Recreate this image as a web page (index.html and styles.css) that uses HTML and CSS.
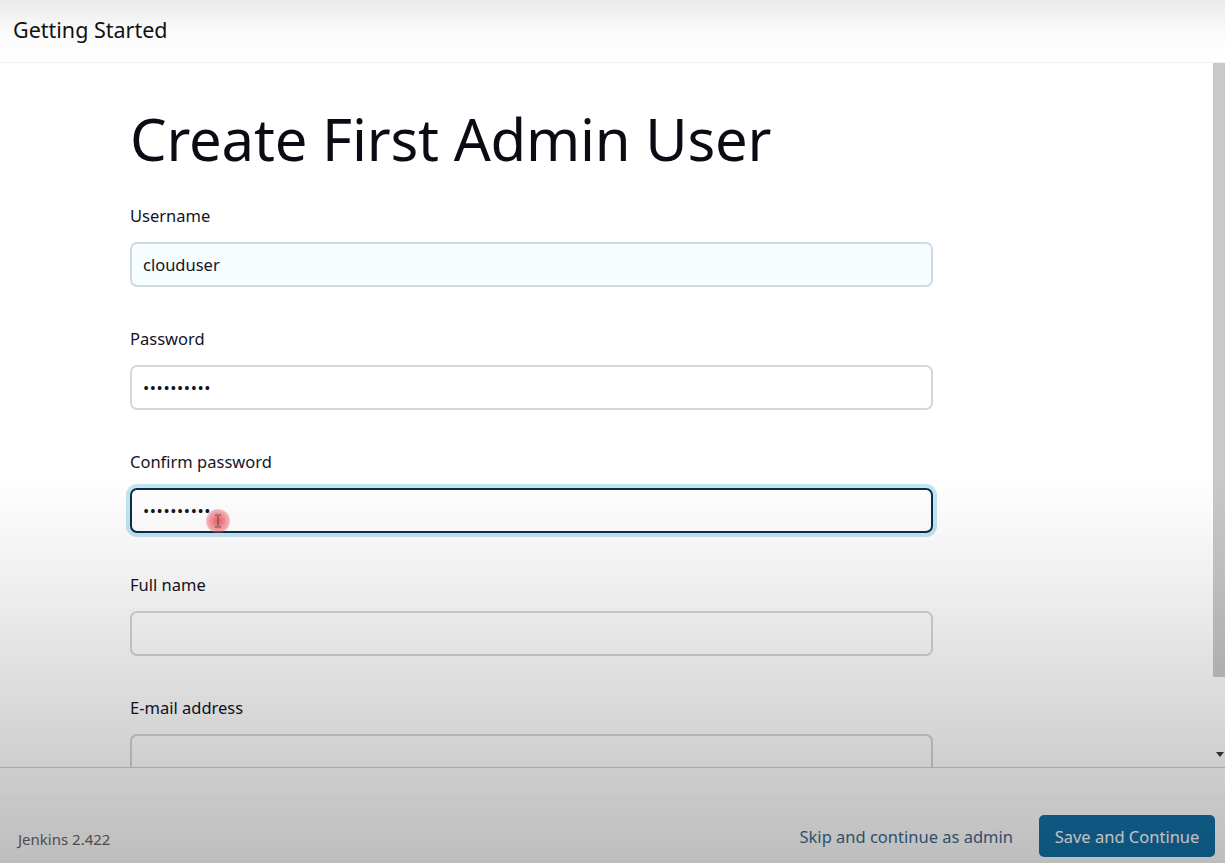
FILE: index.html
```html
<!DOCTYPE html>
<html lang="en">
<head>
    <meta charset="UTF-8">
    <meta name="viewport" content="width=device-width, initial-scale=1.0">
    <title>Setup Wizard [Jenkins]</title>
    <link rel="stylesheet" href="styles.css">
</head>
<body>
    <div class="wizard">
        <header class="wizard-header">
            <h2>Getting Started</h2>
        </header>

        <div class="wizard-body">
            <div class="wizard-content">
                <h1>Create First Admin User</h1>

                <form class="admin-form">
                    <div class="field">
                        <label for="username">Username</label>
                        <input type="text" id="username" class="autofilled" value="clouduser">
                    </div>
                    <div class="field">
                        <label for="password1">Password</label>
                        <input type="password" id="password1" value="cloudpass1">
                    </div>
                    <div class="field">
                        <label for="password2">Confirm password</label>
                        <div class="input-wrap">
                            <input type="password" id="password2" class="focused" value="cloudpass1">
                            <span class="click-mark">
                                <svg width="8" height="14" viewBox="0 0 8 14">
                                    <path d="M1 1h2.5M4.5 1H7M4 1.5v11M1 13h2.5M4.5 13H7" stroke="#555" stroke-width="1" fill="none"/>
                                </svg>
                            </span>
                        </div>
                    </div>
                    <div class="field">
                        <label for="fullname">Full name</label>
                        <input type="text" id="fullname">
                    </div>
                    <div class="field">
                        <label for="email">E-mail address</label>
                        <input type="text" id="email">
                    </div>
                </form>
            </div>

            <div class="scrollbar">
                <div class="scroll-thumb"></div>
                <div class="scroll-arrow"></div>
            </div>
        </div>

        <footer class="wizard-footer">
            <div class="footer-strip"></div>
            <div class="footer-row">
                <span class="version">Jenkins 2.422</span>
                <div class="actions">
                    <a href="#" class="skip-link">Skip and continue as admin</a>
                    <button type="button" class="save-button">Save and Continue</button>
                </div>
            </div>
        </footer>
    </div>

    <div class="shade"></div>
</body>
</html>
```

FILE: styles.css
```css
* {
    box-sizing: border-box;
    margin: 0;
    padding: 0;
    font-family: 'Noto Sans', 'Open Sans', sans-serif;
}

html, body {
    height: 100%;
    overflow: hidden;
}

body {
    background-color: #fff;
    color: #14141f;
}

.wizard {
    display: flex;
    flex-direction: column;
    height: 100vh;
}

.wizard-header {
    height: 63px;
    flex-shrink: 0;
    padding: 15px 0 0 13px;
    background: linear-gradient(to bottom, #ebebeb 0, #fbfbfb 55%, #fff 100%);
    border-bottom: 1px solid #f0f0f0;
}

.wizard-header h2 {
    font-size: 21.5px;
    font-weight: 400;
    line-height: 30px;
    color: #111;
}

.wizard-body {
    flex: 1;
    display: flex;
    min-height: 0;
}

.wizard-content {
    flex: 1;
    padding: 36px 0 0 130px;
    overflow: hidden;
}

.wizard-content h1 {
    font-size: 58px;
    font-weight: 400;
    line-height: 80px;
    letter-spacing: -0.2px;
    color: #0b0b14;
    margin-bottom: 26px;
}

.field {
    width: 803px;
    margin-bottom: 41px;
}

.field label {
    display: block;
    font-size: 16.5px;
    line-height: 22px;
    margin-bottom: 15px;
    color: #14141f;
}

.field input {
    display: block;
    width: 100%;
    height: 45px;
    padding: 0 11px;
    border: 2px solid #d3d6db;
    border-radius: 7px;
    background-color: #fff;
    font-size: 16.5px;
    letter-spacing: 0.6px;
    color: #14141f;
    outline: none;
}

.field input.autofilled {
    background-color: #f6fdff;
    border-color: #d4d8e2;
    letter-spacing: 0;
}

.field input.focused {
    border-color: #0d2f42;
    box-shadow: 0 0 0 4px #c3e5f6;
}

.input-wrap {
    position: relative;
}

.click-mark {
    position: absolute;
    left: 76px;
    top: 21px;
    width: 24px;
    height: 24px;
    border-radius: 50%;
    background: radial-gradient(circle, rgba(235, 50, 60, 0.8) 0, rgba(240, 80, 90, 0.5) 55%, rgba(240, 110, 120, 0) 100%);
    display: flex;
    align-items: center;
    justify-content: center;
}

.scrollbar {
    width: 12px;
    flex-shrink: 0;
    display: flex;
    flex-direction: column;
    align-items: stretch;
}

.scroll-thumb {
    height: 614px;
    background-color: #c9c9c9;
}

.scroll-arrow {
    margin: auto 1px 10px auto;
    width: 0;
    height: 0;
    border-left: 4px solid transparent;
    border-right: 4px solid transparent;
    border-top: 5px solid #3a3a3a;
}

.wizard-footer {
    height: 96px;
    flex-shrink: 0;
    border-top: 1px solid #d2d2d2;
    background-color: #fff;
}

.footer-strip {
    height: 31px;
    border-bottom: 1px solid #f6f6f6;
}

.footer-row {
    display: flex;
    align-items: center;
    justify-content: space-between;
    padding: 16px 10px 0 18px;
}

.version {
    font-size: 15px;
    color: #666;
    padding-top: 6px;
}

.actions {
    display: flex;
    align-items: center;
    gap: 26px;
}

.skip-link {
    font-size: 16.5px;
    color: #3e6a8a;
    text-decoration: none;
}

.save-button {
    width: 176px;
    height: 42px;
    border: none;
    border-radius: 5px;
    background-color: #1372a8;
    color: #fff;
    font-size: 16.5px;
    cursor: pointer;
}

.shade {
    position: fixed;
    inset: 0;
    pointer-events: none;
    background: linear-gradient(to bottom,
        rgba(0, 0, 0, 0) 0,
        rgba(0, 0, 0, 0) 55%,
        rgba(0, 0, 0, 0.06) 67%,
        rgba(0, 0, 0, 0.15) 82%,
        rgba(0, 0, 0, 0.26) 100%);
}
```
